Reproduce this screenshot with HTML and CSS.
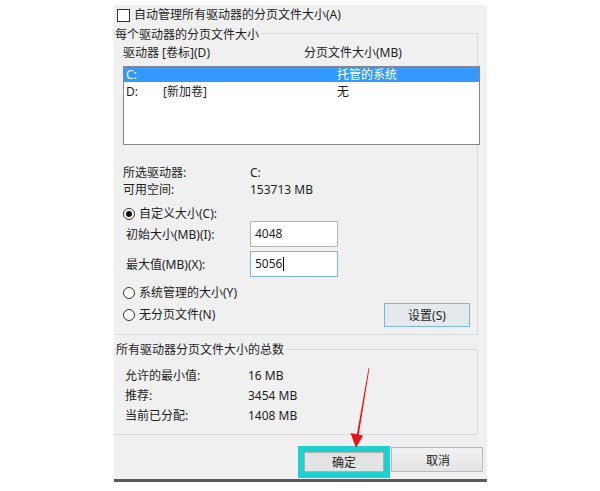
FILE: index.html
```html
<!DOCTYPE html>
<html lang="zh-CN">
<head>
<meta charset="utf-8">
<title>虚拟内存</title>
<link rel="stylesheet" href="styles.css">
</head>
<body>
<div class="dialog">
  <div class="check-row"><span class="checkbox"></span><span>自动管理所有驱动器的分页文件大小(A)</span></div>

  <div class="group g1">
    <div class="legend"><span>每个驱动器的分页文件大小</span></div>
    <div class="cols"><span class="c1">驱动器 [卷标](D)</span><span>分页文件大小(MB)</span></div>
    <div class="listbox">
      <div class="item sel"><span>C:</span><span></span><span>托管的系统</span></div>
      <div class="item"><span>D:</span><span>[新加卷]</span><span>无</span></div>
    </div>
    <div class="info">
      <div class="kv"><span>所选驱动器:</span><span>C:</span></div>
      <div class="kv"><span>可用空间:</span><span>153713 MB</span></div>
    </div>
    <div class="radio-row r-custom"><span class="radio on"></span><span>自定义大小(C):</span></div>
    <div class="field"><span>初始大小(MB)(I):</span><div class="input">4048</div></div>
    <div class="field f2"><span>最大值(MB)(X):</span><div class="input focus">5056<span class="caret"></span></div></div>
    <div class="radio-row r-sys"><span class="radio"></span><span>系统管理的大小(Y)</span></div>
    <div class="row-none">
      <div class="radio-row"><span class="radio"></span><span>无分页文件(N)</span></div>
      <div class="btn set">设置(S)</div>
    </div>
  </div>

  <div class="group g2">
    <div class="legend l2"><span>所有驱动器分页文件大小的总数</span></div>
    <div class="totals">
      <div class="kv2"><span>允许的最小值:</span><span>16 MB</span></div>
      <div class="kv2"><span>推荐:</span><span>3454 MB</span></div>
      <div class="kv2"><span>当前已分配:</span><span>1408 MB</span></div>
    </div>
  </div>

  <div class="actions">
    <div class="highlight"><div class="btn ok">确定</div></div>
    <div class="btn cancel">取消</div>
  </div>
</div>

<svg class="arrow" width="600" height="491" viewBox="0 0 600 491">
  <polygon points="368.6,368 369.4,368 358.6,436 356.6,436" fill="#e8141a"/>
  <polygon points="350.5,433 363,435.5 356,448" fill="#e8141a"/>
</svg>
</body>
</html>
```

FILE: styles.css
```css
* { box-sizing: border-box; }
html, body { margin: 0; padding: 0; background: #fff; }
body {
  width: 600px;
  height: 491px;
  overflow: hidden;
  position: relative;
  font-family: "Noto Sans", "Noto Sans CJK SC", sans-serif;
  font-size: 12px;
  color: #1e1e1e;
}

.dialog {
  margin: 5px 0 0 114px;
  width: 373px;
  height: 477px;
  background: #f0f0f0;
  border-bottom: 3px solid #5a5a5a;
  padding-top: 2px;
  display: flex;
  flex-direction: column;
}

.check-row {
  display: flex;
  align-items: center;
  gap: 4px;
  height: 16px;
  line-height: 16px;
  padding-left: 3px;
}
.checkbox {
  width: 13px;
  height: 13px;
  border: 1px solid #333;
  background: #fff;
  flex: none;
}

.group {
  width: 364px;
  border: 1px solid #dadada;
  border-left: none;
  padding: 0 0 7px 9px;
}
.g1 { margin-top: 10px; }
.g2 { margin-top: 14px; padding-bottom: 8px; }

.legend {
  height: 16px;
  line-height: 16px;
  margin: -7px 0 0 -8px;
}
.legend.l2 { margin-top: -8px; margin-left: -7px; }
.legend span { background: #f0f0f0; padding-right: 3px; }

.cols {
  display: flex;
  margin-top: 2px;
  height: 16px;
  line-height: 16px;
}
.c1 { width: 181px; }

.listbox {
  margin-top: 5px;
  margin-right: -3px;
  height: 79px;
  border: 1px solid #828790;
  background: #fff;
}
.item {
  display: grid;
  grid-template-columns: 37px 174px 1fr;
  height: 15px;
  line-height: 15px;
  padding-left: 2px;
}
.item + .item { margin-top: 2px; }
.item.sel { background: #3399ff; color: #fff; }

.info { margin-top: 19px; }
.kv {
  display: grid;
  grid-template-columns: 127px 1fr;
  height: 17px;
  line-height: 17px;
}

.radio-row {
  display: flex;
  align-items: center;
  gap: 4px;
  height: 16px;
  line-height: 16px;
}
.r-custom { margin-top: 8px; height: 15px; }
.r-sys { margin-top: 8px; }
.radio {
  width: 12px;
  height: 12px;
  border: 1px solid #333;
  border-radius: 50%;
  background: #fff;
  flex: none;
  display: flex;
  align-items: center;
  justify-content: center;
}
.radio.on::after {
  content: "";
  width: 6px;
  height: 6px;
  border-radius: 50%;
  background: #111;
}

.field {
  display: grid;
  grid-template-columns: 124px 88px;
  align-items: center;
  margin-left: 3px;
  height: 26px;
}
.f2 { margin-top: 4px; }
.input {
  height: 26px;
  border: 1px solid #b4b4b4;
  background: #fff;
  padding-left: 4px;
  line-height: 24px;
  display: flex;
  align-items: center;
}
.input.focus { border-color: #7eb4ea; }
.caret {
  display: inline-block;
  width: 1px;
  height: 14px;
  background: #000;
  margin-left: 1px;
}

.row-none {
  display: flex;
  align-items: center;
  justify-content: space-between;
  margin-top: 2px;
  height: 24px;
}

.btn {
  display: flex;
  align-items: center;
  justify-content: center;
  background: #e1e1e1;
  border: 1px solid #adadad;
}
.btn.set {
  width: 86px;
  height: 24px;
  margin-right: 7px;
  border-color: #7eb4ea;
  background: #e6e9ec;
}

.totals { margin-top: 8px; }
.kv2 {
  display: grid;
  grid-template-columns: 123px 1fr;
  height: 20px;
  line-height: 20px;
  margin-left: 2px;
}

.actions {
  display: flex;
  align-items: flex-start;
  margin-top: 11px;
  padding-left: 184px;
}
.highlight {
  width: 92px;
  height: 32px;
  border: 6px solid #1fd0d0;
  flex: none;
}
.btn.ok {
  width: 100%;
  height: 100%;
  background: #e3e3e3;
  border-color: #adadad;
}
.btn.cancel {
  width: 92px;
  height: 25px;
  margin: 1px 0 0 1px;
  background: linear-gradient(#f2f2f2, #e4e4e4);
  border-color: #b9b9b9;
  padding-left: 2px;
}

.arrow {
  position: absolute;
  left: 0;
  top: 0;
  pointer-events: none;
}
```
